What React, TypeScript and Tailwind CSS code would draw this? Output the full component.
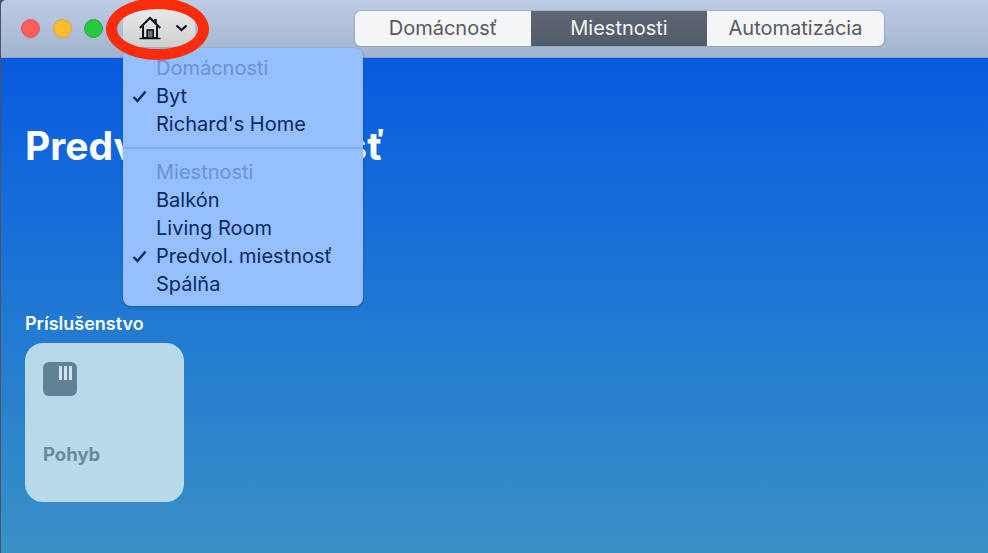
export default function App() {
  const font = { fontFamily: "Inter, 'Liberation Sans', sans-serif" };
  const Item = ({ label, checked }: { label: string; checked?: boolean }) => (
    <div className="relative h-[28px] pl-[33px] text-[20px] leading-[28px] text-[#0a2866]">
      {checked && (
        <svg className="absolute left-[9px] top-[8px]" width="15" height="13" viewBox="0 0 15 13" fill="none">
          <path d="M1.5 7 L5.5 11 L13.5 1.5" stroke="#0a2866" strokeWidth="2.4" />
        </svg>
      )}
      {label}
    </div>
  );
  const Header = ({ label }: { label: string }) => (
    <div className="h-[28px] pl-[33px] text-[20px] leading-[28px] text-[#6c93d2]">{label}</div>
  );
  return (
    <div className="h-[553px] w-[988px] overflow-hidden bg-[#4a5563]" style={font}>
      <div className="relative ml-[1px] flex h-[553px] w-[987px] flex-col overflow-hidden rounded-tl-[5px] bg-[#0a5adf]">
        <div className="flex h-[58px] shrink-0 items-center border-b border-[#8f9fb8] bg-gradient-to-b from-[#bccce5] to-[#a3b4d0] pb-[1px] pl-[20px]">
          <div className="flex gap-[12.5px]">
            <div className="h-[19px] w-[19px] rounded-full border border-[#e0524e] bg-[#fc5f5b]" />
            <div className="h-[19px] w-[19px] rounded-full border border-[#dfa52a] bg-[#fdbd2f]" />
            <div className="h-[19px] w-[19px] rounded-full border border-[#21a93a] bg-[#28c940]" />
          </div>
          <div className="ml-[20px] flex h-[38px] w-[72px] items-center rounded-r-[6px] bg-gradient-to-b from-[#e8e8e8] to-[#d0d0d2] pl-[16px]">
            <svg width="22" height="24" viewBox="0 0 22 24" fill="none" stroke="#0d1420" strokeWidth="2">
              <path d="M0.8 12 L11 2 L21.2 12" />
              <path d="M4 10 V22 H18 V10" />
              <path d="M0.5 22.5 H21.5" strokeWidth="1.6" />
              <path d="M16.5 3 V8" strokeWidth="2.6" />
              <rect x="8.2" y="14" width="6" height="8" fill="#6b7280" stroke="#0d1420" strokeWidth="1.6" />
            </svg>
            <svg className="ml-[14px]" width="13" height="8" viewBox="0 0 13 8" fill="none" stroke="#0d1420" strokeWidth="2.2">
              <path d="M1.5 1.5 L6.5 6 L11.5 1.5" />
            </svg>
          </div>
          <div className="ml-[160px] flex h-[35px] w-[529px] overflow-hidden rounded-[6px] text-[20px] shadow-[0_0_1px_1px_rgba(90,105,135,0.25)]">
            <div className="flex w-[176px] items-center justify-center bg-[#f4f5f7] text-[#555a63]">Domácnosť</div>
            <div className="flex w-[176px] items-center justify-center bg-gradient-to-b from-[#5d6672] to-[#525b68] text-[#f5f6f8]">Miestnosti</div>
            <div className="flex flex-1 items-center justify-center bg-[#f4f5f7] text-[#555a63]">Automatizácia</div>
          </div>
        </div>
        <div className="flex flex-1 flex-col bg-gradient-to-b from-[#0a5ae0] to-[#3a90c5] pl-[24px]">
          <h1 className="mt-[63px] text-[39px] leading-[50px] font-bold text-white">Predvol. miestnosť</h1>
          <div className="mt-[141px] text-[18px] leading-[24px] font-semibold text-white">Príslušenstvo</div>
          <div className="mt-[7px] flex h-[159px] w-[159px] flex-col rounded-[18px] bg-[#b7d9ea] pl-[18px] pt-[19px]">
            <div className="relative h-[34px] w-[34px] rounded-[6px] bg-[#5f8294]">
              <div className="absolute right-[5px] top-[4px] flex gap-[2px]">
                <div className="h-[14px] w-[3px] bg-[#cfe4ee]" />
                <div className="h-[14px] w-[3px] bg-[#cfe4ee]" />
                <div className="h-[14px] w-[3px] bg-[#cfe4ee]" />
              </div>
            </div>
            <div className="mt-[46px] text-[18.5px] leading-[24px] font-bold text-[#668a9c]">Pohyb</div>
          </div>
        </div>
        <div className="absolute left-[122px] top-[48px] h-[258px] w-[240px] rounded-[8px] bg-[#95bffd] pt-[6px] shadow-[0_1px_3px_rgba(20,50,110,0.45)]">
          <Header label="Domácnosti" />
          <Item label="Byt" checked />
          <Item label="Richard's Home" />
          <div className="my-[9px] h-[2px] bg-[#84aeea]" />
          <Header label="Miestnosti" />
          <Item label="Balkón" />
          <Item label="Living Room" />
          <Item label="Predvol. miestnosť" checked />
          <Item label="Spálňa" />
        </div>
        <div className="absolute left-[105px] top-[-2px] h-[62px] w-[103px] rounded-[50%] border-[11px] border-[#fb2c0c]" />
      </div>
    </div>
  );
}
